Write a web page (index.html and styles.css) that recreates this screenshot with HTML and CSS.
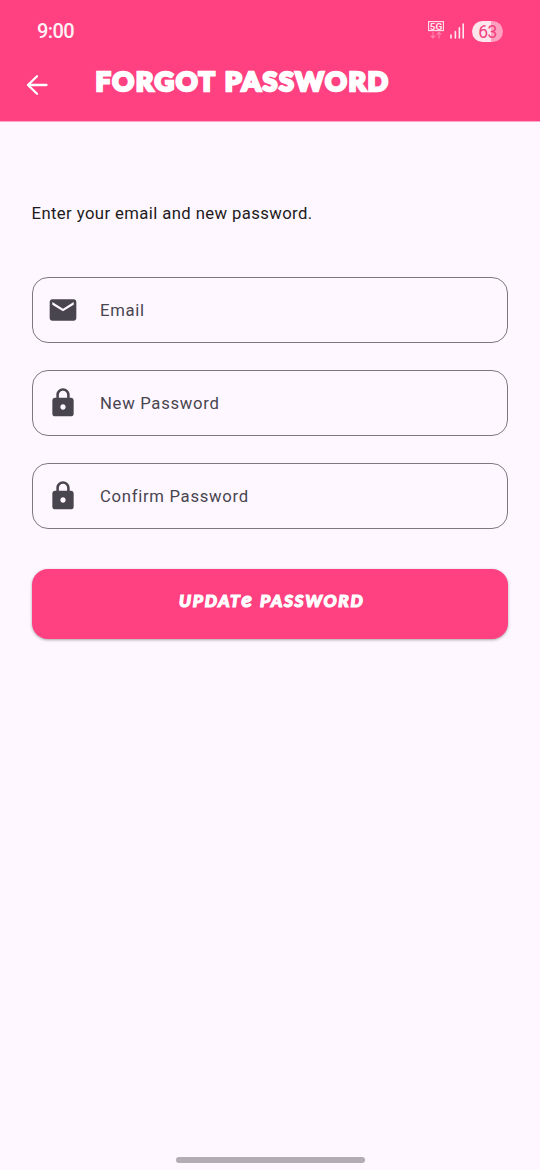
FILE: index.html
```html
<!DOCTYPE html>
<html lang="en">
<head>
<meta charset="utf-8">
<title>Forgot Password</title>
<link rel="stylesheet" href="styles.css">
</head>
<body>
<div class="screen">
  <header class="header">
    <div class="status">
      <span class="clock">9:00</span>
      <svg class="network" width="16" height="20" viewBox="0 0 16 20">
        <rect x=".6" y=".6" width="14.8" height="9" fill="none" stroke="#ffe3ec" stroke-width="1.1"/>
        <text class="network-label" x="8" y="8.6" text-anchor="middle" textLength="12.500" lengthAdjust="spacingAndGlyphs">5G</text>
        <path d="M5 11v6M2.700 14.700 5 17l2.300-2.300M11 17.400v-6M8.700 13.600 11 11.300l2.300 2.300" fill="none" stroke="#ff86ad" stroke-width="1.1"/>
      </svg>
      <svg class="signal" width="15" height="16" viewBox="0 0 15 16">
        <path d="M1 12v3M5.400 8.600V15M9.400 4.700V15M13.200 1v14" stroke="#ffeaf1" stroke-width="1.6" stroke-linecap="round"/>
      </svg>
      <span class="battery">63</span>
    </div>
    <div class="bar">
      <svg class="back" width="24" height="24" viewBox="0 0 24 24">
        <path d="M21.500 12H3M12 3.200 3 12l9 8.800" fill="none" stroke="#fff" stroke-width="2.3" stroke-linecap="round" stroke-linejoin="round"/>
      </svg>
      <h1 class="title">FORGOT PASSWORD</h1>
    </div>
  </header>
  <main class="content">
    <p class="intro">Enter your email and new password.</p>
    <div class="fields">
      <div class="field">
        <svg class="icon" viewBox="0 0 24 24"><path d="M20 4H4c-1.100 0-1.990.9-1.990 2L2 18c0 1.100.9 2 2 2h16c1.100 0 2-.9 2-2V6c0-1.100-.9-2-2-2zm0 4l-8 5-8-5V6l8 5 8-5v2z"/></svg>
        <span class="label">Email</span>
      </div>
      <div class="field">
        <svg class="icon" viewBox="0 0 24 24"><path d="M18 8h-1V6c0-2.760-2.240-5-5-5S7 3.240 7 6v2H6c-1.100 0-2 .9-2 2v10c0 1.100.9 2 2 2h12c1.100 0 2-.9 2-2V10c0-1.100-.9-2-2-2zm-6 9c-1.100 0-2-.9-2-2s.9-2 2-2 2 .9 2 2-.9 2-2 2zm3.100-9H8.900V6c0-1.710 1.390-3.100 3.100-3.100s3.100 1.390 3.100 3.100v2z"/></svg>
        <span class="label">New Password</span>
      </div>
      <div class="field">
        <svg class="icon" viewBox="0 0 24 24"><path d="M18 8h-1V6c0-2.760-2.240-5-5-5S7 3.240 7 6v2H6c-1.100 0-2 .9-2 2v10c0 1.100.9 2 2 2h12c1.100 0 2-.9 2-2V10c0-1.100-.9-2-2-2zm-6 9c-1.100 0-2-.9-2-2s.9-2 2-2 2 .9 2 2-.9 2-2 2zm3.100-9H8.900V6c0-1.710 1.390-3.100 3.100-3.100s3.100 1.390 3.100 3.100v2z"/></svg>
        <span class="label">Confirm Password</span>
      </div>
    </div>
    <button class="submit"><span class="submit-label">UPDAT<span class="tall-e">e</span> PASSWORD</span></button>
  </main>
  <div class="home-indicator"></div>
</div>
</body>
</html>
```
FILE: styles.css
```css
* { box-sizing: border-box; }
body { margin: 0; background: #fef7ff; font-family: Roboto, sans-serif; }
.screen { width: 540px; height: 1170px; display: flex; flex-direction: column; background: #fef7ff; overflow: hidden; }
.header { height: 122px; flex: none; background: linear-gradient(#ff4081 121px, #ffa6c8 121px); color: #fff; }
.status { height: 62px; display: flex; align-items: center; padding: 0 37px; }
.clock { font: 500 20px/24px Roboto, sans-serif; letter-spacing: -.6px; margin-right: auto; color: #fff0f5; }
.network { margin-right: 6px; }
.network-label { font: 700 9.5px Roboto, sans-serif; fill: #ffe3ec; }
.signal { margin-right: 7px; }
.battery { width: 31px; height: 21px; border-radius: 11px; background: linear-gradient(90deg, #ffe6ee 0 62%, #ffa0c0 62%); color: #f0427d; font: 400 17.5px/22px Roboto, sans-serif; text-align: center; letter-spacing: -.7px; }
.bar { display: flex; padding: 0 24.5px; }
.back { margin-top: 11px; }
.title { margin: 1px 0 0 47px; font: 900 27px/36px Lato, sans-serif; letter-spacing: 1.6px; word-spacing: 1px; white-space: nowrap; -webkit-text-stroke: 2.6px #fff; }
.content { flex: 1; padding: 80px 32px 0 31.5px; }
.intro { margin: 0; font-size: 16.7px; line-height: 24px; letter-spacing: .4px; color: #1d1b20; white-space: nowrap; }
.fields { display: flex; flex-direction: column; gap: 26.3px; margin-top: 50.7px; }
.field { height: 66.7px; border: 1.2px solid #7d7780; border-radius: 16px; display: flex; align-items: center; padding-left: 14.5px; gap: 21px; }
.icon { width: 32px; height: 32px; fill: #49454f; }
.label { padding-top: 1.5px; font-size: 16.7px; line-height: 24px; letter-spacing: .7px; color: #49454f; }
.submit { display: flex; justify-content: center; width: 100%; height: 70px; margin-top: 39.7px; padding: 20px 0 0 4px; border: 0; border-radius: 16px; background: #ff4081; color: #fff; box-shadow: 0 1px 3px rgba(0,0,0,.35); }
.submit-label { font: italic 900 17.3px/24px Lato, sans-serif; letter-spacing: 1.7px; word-spacing: 1px; white-space: nowrap; -webkit-text-stroke: 1.2px #fff; }
.tall-e { font-size: 21px; line-height: 0; }
.home-indicator { width: 189px; height: 6px; flex: none; margin: 0 auto 7px; border-radius: 3px; background: #b2acb4; }
```
